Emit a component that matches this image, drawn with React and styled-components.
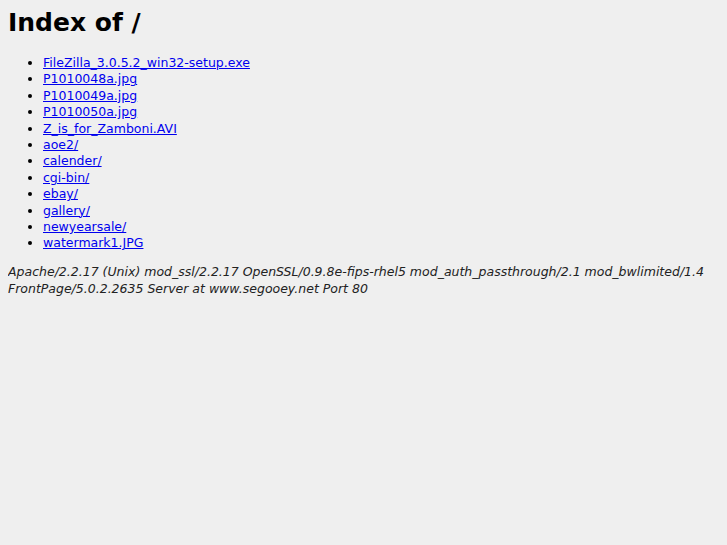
import React from "react";
import styled, { createGlobalStyle } from "styled-components";

const Global = createGlobalStyle`
  html, body { background: #efefef; }
  body { margin: 8px; font-family: "DejaVu Sans", sans-serif; font-size: 12.5px; color: #000; }
`;

const Title = styled.h1`
  font-size: 25px;
  font-weight: bold;
  margin: 0 0 17px 0;
  line-height: 30px;
`;

const List = styled.ul`
  margin: 0 0 11px 0;
  padding-left: 35px;
  line-height: 16.4px;
`;

const Link = styled.a`
  color: #0000ee;
  text-decoration: underline;
`;

const Address = styled.address`
  font-style: italic;
  color: #222;
  line-height: 17px;
`;

const files = [
  "FileZilla_3.0.5.2_win32-setup.exe",
  "P1010048a.jpg",
  "P1010049a.jpg",
  "P1010050a.jpg",
  "Z_is_for_Zamboni.AVI",
  "aoe2/",
  "calender/",
  "cgi-bin/",
  "ebay/",
  "gallery/",
  "newyearsale/",
  "watermark1.JPG",
];

export default function App() {
  return (
    <>
      <Global />
      <Title>Index of /</Title>
      <List>
        {files.map((f) => (
          <li key={f}>
            <Link href="#">{f}</Link>
          </li>
        ))}
      </List>
      <Address>
        Apache/2.2.17 (Unix) mod_ssl/2.2.17 OpenSSL/0.9.8e-fips-rhel5 mod_auth_passthrough/2.1 mod_bwlimited/1.4 FrontPage/5.0.2.2635 Server at www.segooey.net Port 80
      </Address>
    </>
  );
}
